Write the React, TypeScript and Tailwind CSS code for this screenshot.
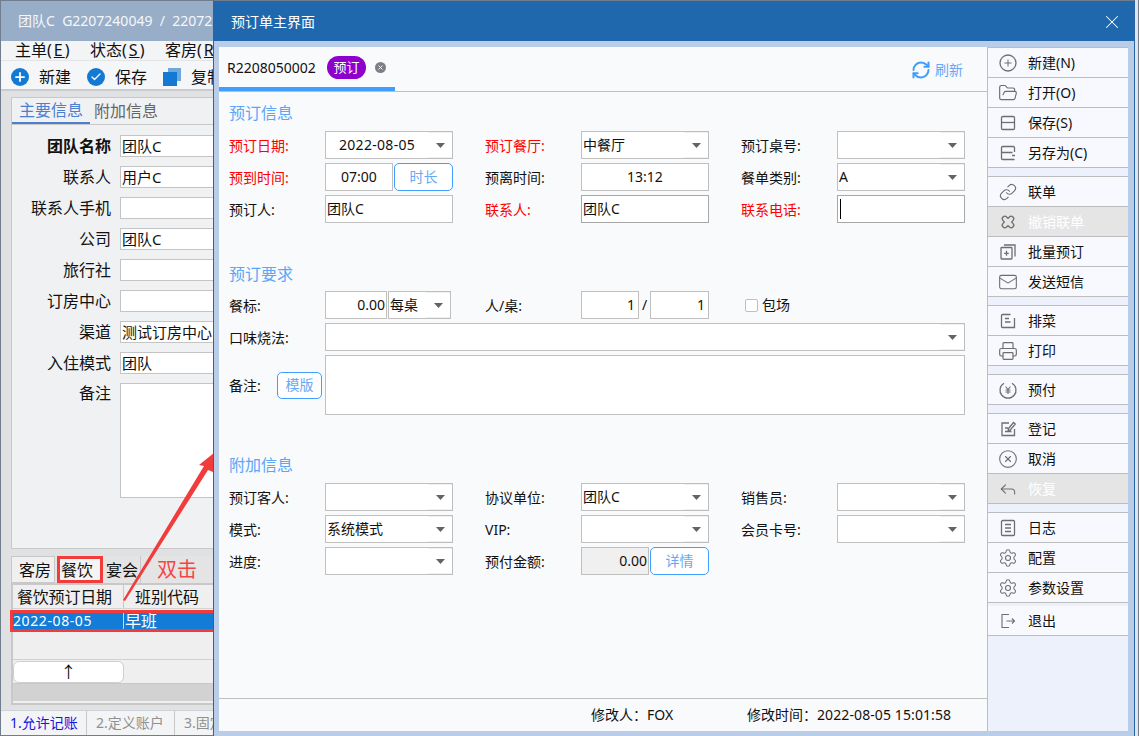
import React from 'react';
import { FolderOpen, Link, Mail, Printer, CircleX, Reply, Settings, RefreshCw, X, Plus, Check } from 'lucide-react';

const FONT = 'font-["Noto_Sans","Noto_Sans_CJK_SC",sans-serif]';

function Svg({ children, className }: { children: React.ReactNode; className?: string }) {
  return (
    <svg viewBox="0 0 20 20" fill="none" stroke="currentColor" strokeWidth="1.3" className={className ?? 'h-5 w-5'}>
      {children}
    </svg>
  );
}

const NewIcon = () => (
  <Svg>
    <circle cx="10" cy="10" r="8" />
    <path d="M10 6.5v7M6.5 10h7" strokeWidth="1" />
  </Svg>
);
const SaveIcon = () => (
  <Svg>
    <rect x="3.5" y="3.5" width="13" height="13" rx="1.2" />
    <path d="M3.5 9.5h13" />
  </Svg>
);
const SaveAsIcon = () => (
  <Svg>
    <path d="M16.5 9V4.7a1.2 1.2 0 0 0-1.2-1.2H4.7a1.2 1.2 0 0 0-1.2 1.2v10.6a1.2 1.2 0 0 0 1.2 1.2h11.8M3.5 9.5h11M14 12.5h3" />
  </Svg>
);
const linkEnds = 'M7.5 7.5H5.5a2.5 2.5 0 0 0 0 5h2M12.5 7.5h2a2.5 2.5 0 0 1 0 5h-2';
const UnlinkIcon = () => (
  <Svg>
    <path d={linkEnds} transform="rotate(45 10 10)" />
    <path d={linkEnds} transform="rotate(-45 10 10)" />
  </Svg>
);
const BatchIcon = () => (
  <Svg>
    <rect x="3" y="5.5" width="11" height="11.5" rx="0.8" />
    <path d="M6 3h11v11.5M8.5 8.8v5M6.2 11.3h4.6" />
  </Svg>
);
const DishIcon = () => (
  <Svg>
    <path d="M16.5 7v9.5h-12a1 1 0 0 1-1-1V4.5a1 1 0 0 1 1-1h8M7 7.5h4M7 11h5.5" />
  </Svg>
);
const PrepayIcon = () => (
  <Svg>
    <path d="M6 3.2a8 8 0 1 0 8 0" />
    <path d="M7.5 6.5 10 9.5l2.5-3M7.5 10h5M7.5 12h5M10 9.5v4.5" strokeWidth="1.1" />
  </Svg>
);
const RegisterIcon = () => (
  <Svg>
    <path d="M11 4H4v12.5h12.5V10M7 9h3M7 12.5h6.5M10.5 9.5l5-6 1.8 1.5-5 6-2.2.6z" />
  </Svg>
);
const LogIcon = () => (
  <Svg>
    <rect x="3.5" y="2.5" width="13" height="15" rx="1.2" />
    <path d="M7 6.5h6M7 10h6M7 13.5h6" />
  </Svg>
);
const ExitIcon = () => (
  <Svg>
    <path d="M11 3.5H4v13h7M8.5 10h8M14 7.5l2.5 2.5-2.5 2.5" strokeWidth="1.1" />
  </Svg>
);

type SideItem = { label: string; icon: React.ReactNode; disabled?: boolean };

const lucideCls = 'h-5 w-5';
const groups: SideItem[][] = [
  [
    { label: '新建(N)', icon: <NewIcon /> },
    { label: '打开(O)', icon: <FolderOpen className={lucideCls} strokeWidth={1.4} /> },
    { label: '保存(S)', icon: <SaveIcon /> },
    { label: '另存为(C)', icon: <SaveAsIcon /> },
  ],
  [
    { label: '联单', icon: <Link className="ml-px h-[18px] w-[18px]" strokeWidth={1.5} /> },
    { label: '撤销联单', icon: <UnlinkIcon />, disabled: true },
    { label: '批量预订', icon: <BatchIcon /> },
    { label: '发送短信', icon: <Mail className={lucideCls} strokeWidth={1.3} /> },
  ],
  [
    { label: '排菜', icon: <DishIcon /> },
    { label: '打印', icon: <Printer className={lucideCls} strokeWidth={1.4} /> },
  ],
  [{ label: '预付', icon: <PrepayIcon /> }],
  [
    { label: '登记', icon: <RegisterIcon /> },
    { label: '取消', icon: <CircleX className={lucideCls} strokeWidth={1.3} /> },
    { label: '恢复', icon: <Reply className={lucideCls} strokeWidth={1.3} />, disabled: true },
  ],
  [
    { label: '日志', icon: <LogIcon /> },
    { label: '配置', icon: <Settings className={lucideCls} strokeWidth={1.3} /> },
    { label: '参数设置', icon: <Settings className={lucideCls} strokeWidth={1.3} /> },
  ],
];

function SideRow({ item }: { item: SideItem }) {
  return (
    <div
      className={`flex h-[30px] items-center border-b border-[#bdbdbd] pl-[10px] text-[14px] leading-5 ${
        item.disabled ? 'bg-[#e5e5e5] text-white' : 'bg-[#f7f9fe] text-[#111]'
      }`}
    >
      <span className="flex w-[30px] text-[#6e6e6e]">{item.icon}</span>
      {item.label}
    </div>
  );
}

function Sidebar() {
  return (
    <div className="flex w-[141px] flex-col border-l border-[#bdbdbd] bg-[#ecf1fb]">
      {groups.map((g, i) => (
        <div key={i} className={i === 0 ? 'border-t border-[#bdbdbd]' : 'mt-[8px] border-t border-[#bdbdbd]'}>
          {g.map((item) => (
            <SideRow key={item.label} item={item} />
          ))}
        </div>
      ))}
      <div className="mt-[3px]">
        <SideRow item={{ label: '退出', icon: <ExitIcon /> }} />
      </div>
    </div>
  );
}

function Label({ text, red, w = 'w-[96px]' }: { text: string; red?: boolean; w?: string }) {
  return <span className={`${w} shrink-0 pt-px text-[14px] leading-5 ${red ? 'text-[#f00]' : 'text-[#111]'}`}>{text}</span>;
}

function Input({ value, className = 'w-[128px]', align = 'text-left', caret }: { value?: string; className?: string; align?: string; caret?: boolean }) {
  return (
    <div className={`flex h-[28px] shrink-0 items-center border border-[#bfbfbf] bg-white px-px text-[14px] leading-5 text-[#111] ${align} ${className}`}>
      <span className="w-full">{value}</span>
      {caret && <span className="absolute ml-[1px] h-[20px] w-px bg-black" />}
    </div>
  );
}

function Select({ value, className = 'w-[128px]', center }: { value?: string; className?: string; center?: boolean }) {
  return (
    <div className={`flex h-[28px] shrink-0 items-center border border-[#bfbfbf] bg-white pl-px text-[14px] leading-5 text-[#111] ${className}`}>
      <span className={`min-w-0 flex-1 ${center ? 'pl-[12px] tracking-[0.3px]' : ''}`}>{value}</span>
      <span className="flex h-full w-[24px] items-center justify-center border-y border-[#f0f0f0]">
        <svg viewBox="0 0 9 5" className="h-[5px] w-[9px]">
          <path d="M0 0h9L4.5 5z" fill="#5f6660" />
        </svg>
      </span>
    </div>
  );
}

function OutlineBtn({ text, className }: { text: string; className: string }) {
  return (
    <div className={`flex shrink-0 items-center justify-center rounded-[5px] border border-[#409eff] bg-white text-[14px] leading-5 text-[#66a9f5] ${className}`}>
      {text}
    </div>
  );
}

function SectionTitle({ text, className }: { text: string; className: string }) {
  return <div className={`h-[22px] text-[16px] leading-[22px] text-[#5ba6f6] ${className}`}>{text}</div>;
}

function Row({ children, className = 'items-center' }: { children: React.ReactNode; className?: string }) {
  return <div className={`flex ${className}`}>{children}</div>;
}

const Gap = () => <span className="w-[32px] shrink-0" />;

function MainPanel() {
  return (
    <div className="flex w-[768px] flex-col bg-[#f9fafc]">
      <div className="flex h-[45px] items-stretch justify-between border-b border-[#bfbfbf] pr-[24px]">
        <div className="flex h-[44px] w-[176px] items-center border-b-4 border-[#409eff] pl-[8px] text-[14px] leading-5 text-[#111]">
          <span className="w-[100px] pt-px">R2208050002</span>
          <span className="flex h-[23px] w-[39px] items-center justify-center rounded-[12px] bg-[#8e00cc] text-[13px] text-white">预订</span>
          <span className="ml-[9px] flex h-[11px] w-[11px] items-center justify-center rounded-full bg-[#7d7f85]">
            <X className="h-[7px] w-[7px] text-white" strokeWidth={3} />
          </span>
        </div>
        <div className="flex items-center gap-[4px] pt-px text-[14px] leading-5 text-[#66a9f5]">
          <RefreshCw className="h-5 w-5 text-[#409eff]" strokeWidth={2.4} />
          刷新
        </div>
      </div>

      <div className="flex-1 pl-[10px] pt-[10px]">
        <SectionTitle text="预订信息" className="mb-[7px]" />
        <div className="flex flex-col gap-[4px]">
          <Row>
            <Label text="预订日期:" red />
            <Select value="2022-08-05" center />
            <Gap />
            <Label text="预订餐厅:" red />
            <Select value="中餐厅" />
            <Gap />
            <Label text="预订桌号:" />
            <Select />
          </Row>
          <Row>
            <Label text="预到时间:" red />
            <Input value="07:00" align="text-center" className="w-[68px]" />
            <OutlineBtn text="时长" className="ml-px h-[28px] w-[59px]" />
            <Gap />
            <Label text="预离时间:" />
            <Input value="13:12" align="text-center" />
            <Gap />
            <Label text="餐单类别:" />
            <Select value="A" />
          </Row>
          <Row>
            <Label text="预订人:" />
            <Input value="团队C" />
            <Gap />
            <Label text="联系人:" red />
            <Input value="团队C" className="w-[128px] !border-[#a8a8a8]" />
            <Gap />
            <Label text="联系电话:" red />
            <Input caret className="w-[128px] !border-[#a8a8a8]" />
          </Row>
        </div>

        <SectionTitle text="预订要求" className="mb-[6px] mt-[40px]" />
        <div className="flex flex-col gap-[4px]">
          <Row>
            <Label text="餐标:" />
            <Input value="0.00" align="text-right" className="w-[62px]" />
            <Select value="每桌" className="ml-px w-[63px]" />
            <span className="w-[34px] shrink-0" />
            <Label text="人/桌:" />
            <Input value="1" align="text-right" className="w-[58px] !pr-[3px]" />
            <span className="w-[11px] shrink-0 text-center text-[14px] leading-5 text-[#111]">/</span>
            <Input value="1" align="text-right" className="w-[59px] !pr-[3px]" />
            <span className="ml-[36px] h-[13px] w-[13px] shrink-0 rounded-[2px] border border-[#bfbfbf] bg-white" />
            <span className="ml-[4px] text-[14px] leading-5 text-[#111]">包场</span>
          </Row>
          <Row>
            <Label text="口味烧法:" />
            <Select className="w-[640px]" />
          </Row>
          <Row>
            <Label text="备注:" w="w-[48px]" />
            <OutlineBtn text="模版" className="h-[27px] w-[45px]" />
            <div className="ml-[3px] h-[60px] w-[640px] border border-[#bfbfbf] bg-white" />
          </Row>
        </div>

        <SectionTitle text="附加信息" className="mb-[7px] mt-[39px]" />
        <div className="flex flex-col gap-[4px]">
          <Row>
            <Label text="预订客人:" />
            <Select />
            <Gap />
            <Label text="协议单位:" />
            <Select value="团队C" />
            <Gap />
            <Label text="销售员:" />
            <Select />
          </Row>
          <Row>
            <Label text="模式:" />
            <Select value="系统模式" />
            <Gap />
            <Label text="VIP:" />
            <Select />
            <Gap />
            <Label text="会员卡号:" />
            <Select />
          </Row>
          <Row>
            <Label text="进度:" />
            <Select />
            <Gap />
            <Label text="预付金额:" />
            <Input value="0.00" align="text-right" className="w-[68px] !bg-[#f0f0f0]" />
            <OutlineBtn text="详情" className="ml-px h-[28px] w-[59px]" />
          </Row>
        </div>
      </div>

      <div className="flex h-[33px] items-center border-t border-[#bfbfbf] pl-[372px] text-[14px] leading-5 text-[#111]">
        <span className="flex w-[156px]">
          <span className="w-[56px]">修改人：</span>FOX
        </span>
        <span className="flex">
          <span className="w-[70px]">修改时间：</span>
          <span className="tracking-[0.1px]">2022-08-05 15:01:58</span>
        </span>
      </div>
    </div>
  );
}

function LeftField({ label, value, bold }: { label: string; value?: string; bold?: boolean }) {
  return (
    <div className="flex h-[22px] items-center">
      <span className={`w-[99px] shrink-0 text-right text-[16px] leading-5 text-[#111] ${bold ? 'font-bold' : ''}`}>{label}</span>
      <div className="ml-[9px] flex h-[22px] w-[200px] shrink-0 items-center border border-[#c4c4c4] bg-white pl-px text-[15px] leading-5 text-[#111]">{value}</div>
    </div>
  );
}

function MenuItem({ text, k, className }: { text: string; k: string; className: string }) {
  return (
    <span className={`shrink-0 whitespace-nowrap ${className}`}>
      {text}
      <span className="tracking-[2px]">
        (<u>{k}</u>)
      </span>
    </span>
  );
}

function BehindWindow() {
  return (
    <div className="relative flex w-[213px] shrink-0 flex-col overflow-hidden border-l border-[#6f7d8c] bg-[#dfe1e3]">
      <div className="flex h-[41px] items-center whitespace-pre border-t border-[#6f7d8c] bg-[#98aec8] pl-[17px] text-[14px] leading-5 text-[#f4f7fa]">
        团队C  G2207240049  /  22072
      </div>
      <div className="flex h-[20px] items-center border-b border-[#e2e4e6] bg-[#f3f4f6] pb-px pl-[14px] text-[16px] leading-5 text-[#111]">
        <MenuItem text="主单" k="E" className="w-[75px]" />
        <MenuItem text="状态" k="S" className="w-[75px]" />
        <MenuItem text="客房" k="R" className="w-[75px]" />
      </div>
      <div className="flex h-[30px] items-center border-b-2 border-[#c9cbce] bg-[#f5f6f7] pl-[10px] pt-[3px] text-[16px] leading-5 text-[#111]">
        <span className="flex h-[18px] w-[18px] shrink-0 items-center justify-center rounded-full bg-[#1379d2]">
          <Plus className="h-[14px] w-[14px] text-white" strokeWidth={3} />
        </span>
        <span className="ml-[10px] shrink-0">新建</span>
        <span className="ml-[16px] flex h-[18px] w-[18px] shrink-0 items-center justify-center rounded-full bg-[#1379d2]">
          <Check className="h-[12px] w-[12px] text-white" strokeWidth={2.5} />
        </span>
        <span className="ml-[10px] shrink-0">保存</span>
        <span className="relative ml-[16px] h-[18px] w-[18px] shrink-0">
          <span className="absolute right-0 top-0 h-[13px] w-[13px] bg-[#6fa8dc]" />
          <span className="absolute bottom-0 left-0 h-[14px] w-[14px] bg-[#1379d2]" />
        </span>
        <span className="ml-[10px] shrink-0 whitespace-nowrap">复制</span>
      </div>

      <div className="ml-[10px] mt-[6px] h-[452px] w-[240px] shrink-0 border border-[#c8c8c8] bg-[#f0f1f3]">
        <div className="flex h-[27px] border-b border-[#c8c8c8] text-[16px] leading-5">
          <span className="flex w-[78px] items-center justify-center border-b-2 border-[#4a7fd0] text-[#4a80d2]">主要信息</span>
          <span className="ml-[4px] flex items-center text-[#666]">附加信息</span>
        </div>
        <div className="flex flex-col gap-[9px] pt-[10px]">
          <LeftField label="团队名称" value="团队C" bold />
          <LeftField label="联系人" value="用户C" />
          <LeftField label="联系人手机" />
          <LeftField label="公司" value="团队C" />
          <LeftField label="旅行社" />
          <LeftField label="订房中心" />
          <LeftField label="渠道" value="测试订房中心" />
          <LeftField label="入住模式" value="团队" />
          <div className="flex">
            <span className="w-[99px] shrink-0 text-right text-[16px] leading-5 text-[#111]">备注</span>
            <div className="ml-[9px] h-[115px] w-[200px] shrink-0 border border-[#c4c4c4] bg-white" />
          </div>
        </div>
      </div>

      <div className="ml-[10px] mt-[7px] flex h-[27px] w-[240px] shrink-0 items-stretch bg-[#e4e4e4] text-[16px] leading-5 text-[#111]">
        <span className="flex w-[44px] items-center justify-end border border-[#c8c8c8] bg-[#f0f0f0] pr-[3px]">客房</span>
        <span className="ml-[2px] flex w-[46px] items-center border-[3px] border-[#f23c3c] bg-[#f4f4f4] pl-[1px]">餐饮</span>
        <span className="flex w-[38px] items-center justify-end border-r border-[#c8c8c8] pr-[2px]">宴会</span>
        <span className="ml-[16px] flex items-center text-[20px] text-[#f44545]">双击</span>
      </div>

      <div className="ml-[10px] flex h-[122px] w-[240px] shrink-0 flex-col border-2 border-[#c8c8c8] bg-[#efefef] text-[16px] leading-5 text-[#111]">
        <div className="flex h-[24px] shrink-0 border-b border-[#d4d4d4]">
          <span className="flex w-[111px] items-center border-r border-[#c8c8c8] pl-[4px] tracking-[-0.2px]">餐饮预订日期</span>
          <span className="pl-[11px] pt-[2px]">班别代码</span>
        </div>
        <div className="-ml-[3px] mt-[1px] flex h-[22px] w-[207px] shrink-0 border-[3px] border-[#f23c3c] bg-[#127cd6] text-white">
          <span className="flex w-[111px] items-center border-r border-[#c8d8e8] text-[14px] tracking-[0.6px]">2022-08-05</span>
          <span className="flex items-center pl-px">早班</span>
        </div>
        <div className="h-[28px] shrink-0 border-b border-[#d0d0d0]" />
        <div className="flex h-[24px] shrink-0 items-center border-b border-[#c8c8c8]">
          <span className="flex h-[22px] w-[111px] items-center justify-center rounded-[6px] border border-[#cfcfcf] bg-white">↑</span>
        </div>
        <div className="h-[17px] shrink-0 bg-[#d2d2d2]" />
      </div>

      <div className="mt-[5px] flex h-[26px] shrink-0 items-center border-y border-t-[#cfd2d6] border-b-[#6f7d8c] bg-[#f3f4f6] text-[14px] leading-5">
        <span className="flex h-full w-[86px] shrink-0 items-center whitespace-nowrap border-r border-[#c8c8c8] pl-[9px] text-[#1515e0]">1.允许记账</span>
        <span className="flex h-full w-[88px] shrink-0 items-center whitespace-nowrap border-r border-[#c8c8c8] pl-[9px] text-[#909090]">2.定义账户</span>
        <span className="ml-[9px] whitespace-nowrap text-[#909090]">3.固定</span>
      </div>

      {/* 指向预订单窗口的红色箭头 */}
      <svg className="pointer-events-none absolute -left-px top-0 h-[736px] w-[214px]" viewBox="0 0 214 736">
        <path d="M123 600 204 466 199 465 214 453 213 472 208 470 125 601z" fill="#f23c3c" />
      </svg>
    </div>
  );
}

export default function App() {
  return (
    <div className={`flex h-[736px] w-[1139px] overflow-hidden bg-[#dfe4ea] ${FONT}`}>
      <BehindWindow />
      <div className="flex w-[922px] shrink-0 flex-col border-x border-t border-x-[#2a64a4] border-t-[#6f7d8c] bg-[#b9cde9]">
        <div className="flex h-[40px] shrink-0 items-center justify-between bg-[#1f68ad] pl-[17px] pr-[11px] pt-[2px] text-[14px] leading-5 text-white">
          预订单主界面
          <X className="h-[22px] w-[22px]" strokeWidth={1.1} />
        </div>
        <div className="flex h-[690px] pl-[5px] pt-[6px]">
          <MainPanel />
          <Sidebar />
        </div>
      </div>
      <div className="flex-1 border-r border-[#6f7d8c]" />
    </div>
  );
}
